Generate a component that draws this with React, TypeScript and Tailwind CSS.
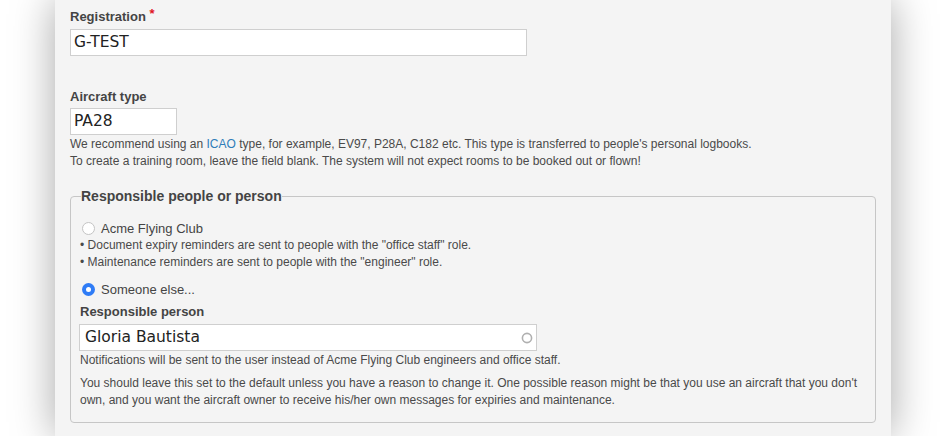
import React from "react";

function Radio({ checked }: { checked?: boolean }) {
  return checked ? (
    <span className="inline-flex h-[13px] w-[13px] shrink-0 items-center justify-center rounded-full bg-[#2f7cf6]">
      <span className="h-[5px] w-[5px] rounded-full bg-white" />
    </span>
  ) : (
    <span className="inline-block h-[13px] w-[13px] shrink-0 rounded-full border border-[#c4c4c4] bg-white" />
  );
}

export default function App() {
  const sans = { fontFamily: '"Liberation Sans", Arial, Helvetica, sans-serif' };
  return (
    <div className="h-[436px] w-full overflow-hidden bg-white" style={sans}>
      <div className="ml-[55px] h-full w-[836px] bg-[#f4f4f4] px-[15px] pt-[9px] text-[#444] shadow-[0_0_40px_rgba(0,0,0,0.35)]">
        <label className="mb-1 block text-[13px] font-bold leading-[16px] text-[#444]">
          Registration <span className="relative -top-[3px] text-[#e0141e]">*</span>
        </label>
        <div className="flex h-[27px] w-[457px] items-center border border-[#cfcfcf] bg-white pl-[3px] text-[15.5px] text-[#222] [font-family:'DejaVu_Sans',sans-serif]">
          G-TEST
        </div>

        <label className="mb-[3px] mt-[33px] block text-[13px] font-bold leading-[16px] text-[#444]">
          Aircraft type
        </label>
        <div className="flex h-[27px] w-[107px] items-center border border-[#cfcfcf] bg-white pl-[3px] text-[15.5px] text-[#222] [font-family:'DejaVu_Sans',sans-serif]">
          PA28
        </div>
        <div className="mt-[1px] text-[12px] leading-[17px] text-[#4a4a4a]">
          <div>
            We recommend using an <span className="text-[#2f7db9]">ICAO</span> type, for example, EV97, P28A, C182 etc. This type is transferred to people's personal logbooks.
          </div>
          <div>To create a training room, leave the field blank. The system will not expect rooms to be booked out or flown!</div>
        </div>

        <fieldset className="mt-[18px] rounded-[4px] border border-[#c6c6c6] pb-[13px] pl-[9px] pr-[10px] pt-[15px]">
          <legend className="ml-[1px] text-[14px] font-bold leading-[17px] text-[#444]">Responsible people or person</legend>
          <div className="flex items-center text-[13px] leading-[17px] text-[#444]">
            <span className="ml-[2px] mr-[6px] flex"><Radio /></span>
            Acme Flying Club
          </div>
          <div className="text-[12px] leading-[17px] text-[#4a4a4a]">
            <div>• Document expiry reminders are sent to people with the "office staff" role.</div>
            <div>• Maintenance reminders are sent to people with the "engineer" role.</div>
          </div>
          <div className="mt-[10px] flex items-center text-[13px] leading-[17px] text-[#444]">
            <span className="ml-[2px] mr-[6px] flex"><Radio checked /></span>
            Someone else...
          </div>
          <label className="mb-1 mt-[6px] block text-[13px] font-bold leading-[16px] text-[#444]">
            Responsible person
          </label>
          <div className="-ml-[1px] flex h-[27px] w-[458px] items-center justify-between border border-[#cfcfcf] bg-white pl-[5px] pr-[3px] text-[15.5px] text-[#222] [font-family:'DejaVu_Sans',sans-serif]">
            <span>Gloria Bautista</span>
            <svg width="12" height="12" viewBox="0 0 12 12">
              <circle cx="6" cy="6" r="4.6" fill="none" stroke="#b0b0b0" strokeWidth="1.6" />
            </svg>
          </div>
          <div className="mt-[1px] text-[12px] leading-[17px] text-[#4a4a4a]">
            Notifications will be sent to the user instead of Acme Flying Club engineers and office staff.
          </div>
          <div className="mt-[6px] text-[12px] leading-[17px] text-[#4a4a4a]">
            You should leave this set to the default unless you have a reason to change it. One possible reason might be that you use an aircraft that you don't own, and you want the aircraft owner to receive his/her own messages for expiries and maintenance.
          </div>
        </fieldset>
      </div>
    </div>
  );
}
